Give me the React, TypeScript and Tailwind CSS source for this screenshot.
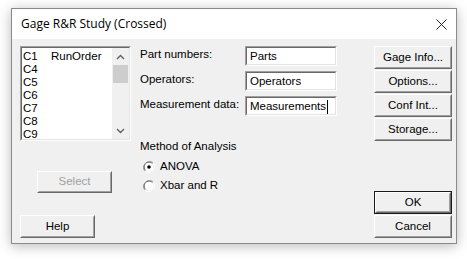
import React from 'react';

const font = "font-['Liberation_Sans',Arial,sans-serif]";

function Btn({ label, w = 'w-[78px]', h = 'h-[23px]', isDefault = false, disabled = false }: { label: string; w?: string; h?: string; isDefault?: boolean; disabled?: boolean }) {
    return (
        <div className={`${w} ${h} ${isDefault ? 'border border-[#1a1a1a]' : ''} flex`}>
            <div className="flex-1 flex border border-t-white border-l-white border-r-[#696969] border-b-[#696969]">
                <div className={`flex-1 flex items-center justify-center bg-[#f0f0f0] border border-t-[#f0f0f0] border-l-[#f0f0f0] border-r-[#a0a0a0] border-b-[#a0a0a0] text-[11.5px] ${disabled ? 'text-[#a0a0a0]' : 'text-black'}`}>
                    {label}
                </div>
            </div>
        </div>
    );
}

function Field({ label, value, caret = false }: { label: string; value: string; caret?: boolean }) {
    return (
        <div className="flex items-center h-[20px]">
            <span className="w-[105px] text-[11.5px] leading-none -mt-[2px]">{label}</span>
            <div className="w-[92px] h-[20px] flex border border-t-[#a0a0a0] border-l-[#a0a0a0] border-r-white border-b-white">
                <div className="flex-1 bg-white border border-t-[#696969] border-l-[#696969] border-r-[#e3e3e3] border-b-[#e3e3e3] flex items-center pl-[3px] text-[11.5px] pt-[1px]">
                    {value}
                    {caret && <span className="w-px h-[14px] bg-black ml-[1px]" />}
                </div>
            </div>
        </div>
    );
}

function Radio({ label, checked }: { label: string; checked?: boolean }) {
    return (
        <div className="flex items-center gap-[5px] h-[19px]">
            <svg width="12" height="12" viewBox="0 0 12 12">
                <path d="M10.2 1.8 A6 6 0 0 0 1.8 10.2" fill="none" stroke="#a0a0a0" strokeWidth="1" />
                <path d="M9.4 2.6 A4.8 4.8 0 0 0 2.6 9.4" fill="none" stroke="#696969" strokeWidth="1" />
                <path d="M1.8 10.2 A6 6 0 0 0 10.2 1.8" fill="none" stroke="#ffffff" strokeWidth="1" />
                <circle cx="6" cy="6" r="4.2" fill="#ffffff" />
                {checked && <circle cx="6" cy="6" r="1.8" fill="#000" />}
            </svg>
            <span className="text-[11.5px]">{label}</span>
        </div>
    );
}

function Chevron({ up }: { up?: boolean }) {
    return (
        <svg width="9" height="6" viewBox="0 0 9 6">
            <path d={up ? 'M1 5 L4.5 1.5 L8 5' : 'M1 1 L4.5 4.5 L8 1'} fill="none" stroke="#606060" strokeWidth="1.4" />
        </svg>
    );
}

const columns = [
    { id: 'C1', name: 'RunOrder' },
    { id: 'C4', name: '' },
    { id: 'C5', name: '' },
    { id: 'C6', name: '' },
    { id: 'C7', name: '' },
    { id: 'C8', name: '' },
    { id: 'C9', name: '' },
];

export default function App() {
    return (
        <div className={`w-[467px] h-[259px] bg-white pt-[8px] pl-[11px] ${font} text-black`}>
            <div className="w-[446px] h-[236px] flex flex-col border border-[#8a8a8a] shadow-[0_2px_12px_rgba(0,0,0,0.28)]">
                <header className="h-[30px] bg-white flex items-center justify-between pl-[9px] pr-[9px]">
                    <span className="text-[12px] font-['Open_Sans',sans-serif] text-black">Gage R&amp;R Study (Crossed)</span>
                    <svg width="11" height="11" viewBox="0 0 11 11">
                        <path d="M0.5 0.5 L10.5 10.5 M10.5 0.5 L0.5 10.5" stroke="#222" strokeWidth="1" />
                    </svg>
                </header>
                <div className="flex-1 bg-[#f0f0f0] flex pl-[8px] pt-[7px] pb-[5px]">
                    {/* left column */}
                    <div className="w-[111px] flex flex-col">
                        <div className="h-[95px] flex border border-t-[#a0a0a0] border-l-[#a0a0a0] border-r-white border-b-white">
                            <div className="flex-1 flex bg-white border border-t-[#696969] border-l-[#696969] border-r-[#e3e3e3] border-b-[#e3e3e3]">
                                <ul className="flex-1 flex flex-col pl-[1px] pt-[2px] m-0 list-none text-[11.5px] leading-[13px]">
                                    {columns.map((c) => (
                                        <li key={c.id} className="flex">
                                            <span className="w-[28px]">{c.id}</span>
                                            <span>{c.name}</span>
                                        </li>
                                    ))}
                                </ul>
                                <div className="w-[17px] bg-[#f0f0f0] flex flex-col items-center">
                                    <div className="h-[17px] flex items-center justify-center"><Chevron up /></div>
                                    <div className="w-[15px] h-[18px] bg-[#cdcdcd]" />
                                    <div className="flex-1" />
                                    <div className="h-[17px] flex items-center justify-center"><Chevron /></div>
                                </div>
                            </div>
                        </div>
                        <div className="mt-[30px] ml-[17px]">
                            <Btn label="Select" w="w-[75px]" h="h-[22px]" disabled />
                        </div>
                        <div className="mt-auto">
                            <Btn label="Help" w="w-[75px]" />
                        </div>
                    </div>
                    {/* middle column */}
                    <div className="ml-[9px] w-[197px] flex flex-col">
                        <div className="flex flex-col gap-[5px]">
                            <Field label="Part numbers:" value="Parts" />
                            <Field label="Operators:" value="Operators" />
                            <Field label="Measurement data:" value="Measurements" caret />
                        </div>
                        <div className="mt-[25px] text-[11.5px] leading-none">Method of Analysis</div>
                        <div className="mt-[5px] ml-[3px] flex flex-col">
                            <Radio label="ANOVA" checked />
                            <Radio label="Xbar and R" />
                        </div>
                    </div>
                    {/* right column */}
                    <div className="ml-[37px] w-[78px] flex flex-col">
                        <div className="flex flex-col gap-[1px]">
                            <Btn label="Gage Info..." />
                            <Btn label="Options..." />
                            <Btn label="Conf Int..." />
                            <Btn label="Storage..." />
                        </div>
                        <div className="mt-auto flex flex-col gap-[1px]">
                            <Btn label="OK" isDefault />
                            <Btn label="Cancel" />
                        </div>
                    </div>
                </div>
            </div>
        </div>
    );
}
